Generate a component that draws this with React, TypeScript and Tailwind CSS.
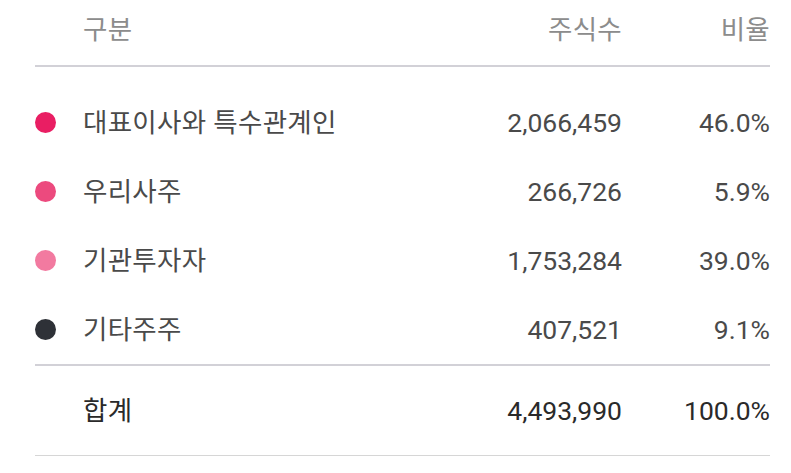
import React from "react";

const rows = [
  { color: "bg-[#e91e63]", label: "대표이사와 특수관계인", shares: "2,066,459", pct: "46.0%" },
  { color: "bg-[#ec4a7e]", label: "우리사주", shares: "266,726", pct: "5.9%" },
  { color: "bg-[#f27aa0]", label: "기관투자자", shares: "1,753,284", pct: "39.0%" },
  { color: "bg-[#2e3137]", label: "기타주주", shares: "407,521", pct: "9.1%" },
];

const font = { fontFamily: "Roboto, 'Noto Sans CJK KR', sans-serif" };

export default function App() {
  return (
    <div className="w-[791px] h-[473px] bg-white px-[35px]" style={font}>
      <div className="w-[735px]">
        <div className="flex items-center h-[67px] pb-[6px] border-b-2 border-[#d2d1d7] text-[26.5px] text-[#8c8c8c]">
          <div className="w-[48px]" />
          <div className="flex-1 tracking-[0.3px]">구분</div>
          <div className="w-[200px] text-right tracking-[0.3px]">주식수</div>
          <div className="w-[148px] text-right tracking-[0.3px]">비율</div>
        </div>
        <div className="pt-[21px] border-b-2 border-[#d2d1d7]">
          {rows.map((r) => (
            <div key={r.label} className="flex items-center h-[69px] text-[26.5px] text-[#4a4a4a]">
              <div className="w-[48px] flex items-center">
                <span className={`block w-[21px] h-[21px] rounded-full ${r.color}`} />
              </div>
              <div className="flex-1 tracking-[0.3px]">{r.label}</div>
              <div className="w-[200px] text-right">{r.shares}</div>
              <div className="w-[148px] text-right">{r.pct}</div>
            </div>
          ))}
        </div>
        <div className="flex items-center h-[90px] border-b border-[#d6d6d6] text-[26.5px] text-[#2a2a2a]">
          <div className="w-[48px]" />
          <div className="flex-1 tracking-[0.3px]">합계</div>
          <div className="w-[200px] text-right">4,493,990</div>
          <div className="w-[148px] text-right">100.0%</div>
        </div>
      </div>
    </div>
  );
}
